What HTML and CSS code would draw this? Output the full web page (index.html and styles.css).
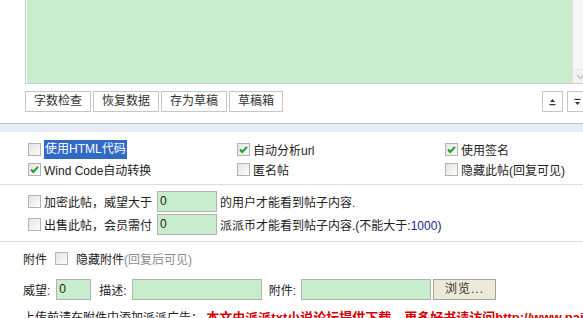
FILE: index.html
```html
<!DOCTYPE html>
<html lang="zh-CN">
<head>
	<meta charset="UTF-8">
	<title>发表新帖</title>
	<link rel="stylesheet" href="styles.css">
</head>
<body>

	<div class="editor">
		<div class="textbox">
			<div class="textbox-area"></div>
			<div class="scrollbar">
				<span class="scroll-down"><svg width="9" height="6" viewBox="0 0 9 6"><path d="M1 1 L4.5 4.5 L8 1" fill="none" stroke="#c4c4c4" stroke-width="1.4"/></svg></span>
			</div>
		</div>
		<div class="toolbar">
			<button class="btn">字数检查</button>
			<button class="btn">恢复数据</button>
			<button class="btn">存为草稿</button>
			<button class="btn">草稿箱</button>
			<div class="resize">
				<button class="btn btn-small" title="增大"><svg width="7" height="8" viewBox="0 0 7 8"><path d="M3.5 1 L6 4 L1 4 Z" fill="#333"/><rect x="0.5" y="6" width="6" height="1.2" fill="#333"/></svg></button>
				<button class="btn btn-small" title="缩小"><svg width="7" height="8" viewBox="0 0 7 8"><rect x="0.5" y="0.8" width="6" height="1.2" fill="#333"/><path d="M1 4 L6 4 L3.5 7 Z" fill="#333"/></svg></button>
			</div>
		</div>
	</div>

	<div class="band"></div>

	<div class="options">
		<label class="opt"><span class="box"></span><span class="sel">使用HTML代码</span></label>
		<label class="opt"><span class="box checked"><svg width="11" height="11" viewBox="0 0 11 11"><path d="M2 5.5 L4.3 8 L9 2.8" fill="none" stroke="#21a121" stroke-width="2"/></svg></span>自动分析url</label>
		<label class="opt"><span class="box checked"><svg width="11" height="11" viewBox="0 0 11 11"><path d="M2 5.5 L4.3 8 L9 2.8" fill="none" stroke="#21a121" stroke-width="2"/></svg></span>使用签名</label>
		<label class="opt"><span class="box checked"><svg width="11" height="11" viewBox="0 0 11 11"><path d="M2 5.5 L4.3 8 L9 2.8" fill="none" stroke="#21a121" stroke-width="2"/></svg></span>Wind Code自动转换</label>
		<label class="opt"><span class="box"></span>匿名帖</label>
		<label class="opt"><span class="box"></span>隐藏此帖(回复可见)</label>
	</div>

	<div class="perm">
		<div class="perm-row"><span class="box"></span><span class="perm-label">加密此帖，威望大于</span><span class="field field-perm">0</span><span>的用户才能看到帖子内容.</span></div>
		<div class="perm-row"><span class="box"></span><span class="perm-label">出售此帖，会员需付</span><span class="field field-perm">0</span><span>派派币才能看到帖子内容.(不能大于:<span class="num">1000</span>)</span></div>
	</div>

	<div class="attach">
		<span>附件</span>
		<span class="box"></span>
		<span>隐藏附件<span class="muted">(回复后可见)</span></span>
	</div>

	<div class="attach-fields">
		<span>威望:</span>
		<span class="field field-small">0</span>
		<span class="label-gap">描述:</span>
		<span class="field field-wide"></span>
		<span class="label-gap label-tight">附件:</span>
		<span class="field field-wide"></span>
		<button class="btn btn-browse">浏览...</button>
	</div>

	<div class="notice">上传前请在附件中添加派派广告： <b class="ad">本文由派派txt小说论坛提供下载，更多好书请访问http://www.paipaitxt.com</b></div>

</body>
</html>
```

FILE: styles.css
```css
*, *:after, *:before { box-sizing: border-box; }
html, body { margin: 0; padding: 0; overflow: hidden; background: #fff; }
body { font-family: "Liberation Sans", "Noto Sans CJK SC", sans-serif; font-size: 12px; color: #222; width: 600px; }

/* editor */
.editor { margin-left: 25px; width: 563px; }
.textbox { display: flex; height: 84px; border-left: 1px solid #c9c9c9; border-bottom: 1px solid #cfcfcf; }
.textbox-area { flex: 1; background: #c8edcc; border-left: 1px solid #fff; }
.scrollbar { width: 16px; background: #f7f7f7; border-left: 1px solid #e2e2e2; display: flex; flex-direction: column; justify-content: flex-end; }
.scroll-down { display: flex; align-items: center; justify-content: center; height: 14px; border-top: 1px solid #e6e6e6; background: #f2f2f2; }

.toolbar { display: flex; gap: 2px; margin-top: 7px; height: 21px; }
.btn { font: inherit; color: #333; background: #fff; border: 1px solid #c6c6c6; height: 21px; padding: 0 8px; margin: 0; line-height: 19px; }
.resize { display: flex; gap: 4px; margin-left: auto; }
.btn-small { width: 21px; padding: 0; display: flex; align-items: center; justify-content: center; }

.band { margin-top: 11px; height: 9px; background: #e6ecf5; border-top: 1px solid #bac6d7; }

/* checkboxes */
.box { display: inline-flex; align-items: center; justify-content: center; width: 13px; height: 13px; border: 1px solid #b3b3b3; background: linear-gradient(135deg, #e3e3e3, #fdfdfd); flex: 0 0 auto; }

/* options */
.options { display: grid; grid-template-columns: 209px 208px 140px; grid-auto-rows: 20px; padding: 7px 0 0 28px; }
.opt { display: flex; align-items: center; gap: 3px; white-space: nowrap; }
.sel { background: #316ac5; color: #fff; height: 19px; line-height: 19px; padding: 0 1px; }

/* permissions */
.perm { margin-top: 5px; padding: 6px 0 6px 28px; border-top: 1px solid #dcdcdc; border-bottom: 1px solid #dcdcdc; display: flex; flex-direction: column; gap: 2px; }
.perm-row { display: flex; align-items: center; height: 21px; white-space: nowrap; }
.perm-label { margin: 0 5px 0 3px; }
.field { display: inline-block; height: 21px; background: #c8edcc; border: 1px solid #b2b2b2; padding-left: 2px; line-height: 19px; }
.field-perm { width: 60px; margin-right: 3px; }
.num { color: #1b2c8c; }

/* attachments */
.attach { display: flex; align-items: center; gap: 8px; height: 21px; margin-top: 6px; padding-left: 23px; }
.muted { color: #8a8a8a; }

.attach-fields { display: flex; align-items: center; height: 21px; margin-top: 10px; padding-left: 23px; white-space: nowrap; }
.field-small { width: 35px; margin-left: 6px; }
.label-gap { margin: 0 5px 0 8px; }
.label-tight { margin-left: 7px; }
.field-wide { width: 130px; }
.btn-browse { margin-left: 2px; width: 63px; padding: 0; background: #ece9d8; border-color: #a3a3a3; letter-spacing: 1px; }

.notice { margin-top: 10px; padding-left: 23px; line-height: 16px; white-space: nowrap; }
.ad { color: #d40000; font-size: 13px; }
```
